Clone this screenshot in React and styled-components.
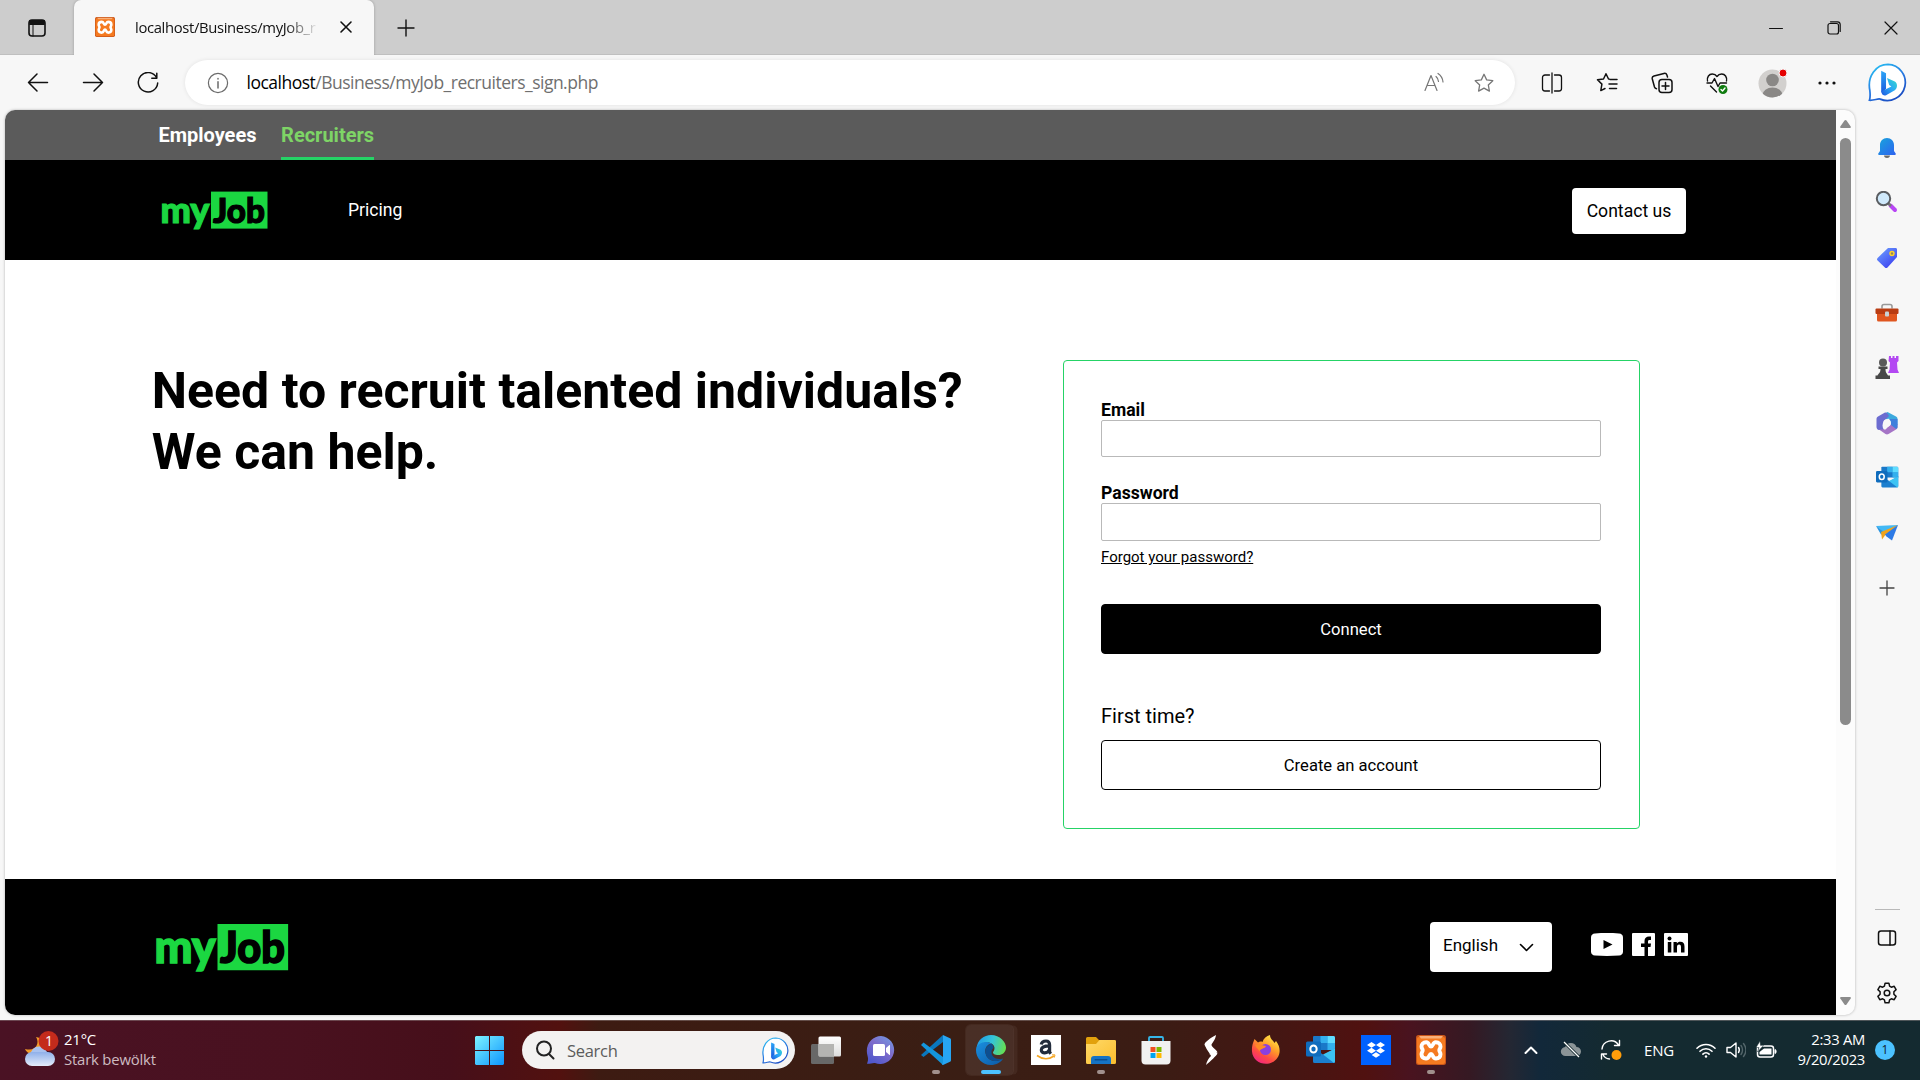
import React from "react";
import styled, { createGlobalStyle } from "styled-components";

const Global = createGlobalStyle`
  * { box-sizing: border-box; }
  html, body { margin: 0; padding: 0; background: #f7f7f7; }
  body { width: 1920px; height: 1080px; overflow: hidden; }
  svg { display: block; flex: none; }
  a { color: inherit; text-decoration: none; }
  button { font: inherit; }
`;

const ui = `"Open Sans", "Noto Sans", sans-serif`;
const web = `Roboto, "Liberation Sans", sans-serif`;

/* ---------- window shell ---------- */
const Screen = styled.div`
  width: 1920px;
  height: 1080px;
  display: flex;
  flex-direction: column;
  font-family: ${ui};
  color: #111;
`;
const Slot = styled.div`
  width: ${(p) => p.$w}px;
  height: ${(p) => (p.$h ? `${p.$h}px` : "100%")};
  flex: none;
  display: flex;
  align-items: center;
  justify-content: center;
`;
const Spacer = styled.div`
  flex: 1;
`;

const TabStrip = styled.header`
  height: 55px;
  flex: none;
  display: flex;
  background: #cdcdcd;
  box-shadow: inset 0 -1px 0 #bfbfbf;
`;
const TabShell = styled.div`
  width: 300px;
  height: 55px;
  display: flex;
  align-items: center;
  padding: 0 18px 1px 21px;
  background: #f7f7f7;
  border-radius: 7px 7px 0 0;
  box-shadow: 0 0 3px rgba(0, 0, 0, 0.25);
  clip-path: inset(0 -4px 0 -4px);
`;
const TabTitle = styled.div`
  width: 184px;
  margin-left: 20px;
  margin-right: 20px;
  white-space: nowrap;
  font-size: 14.8px;
  letter-spacing: -0.34px;
  mask-image: linear-gradient(90deg, #000 150px, transparent 184px);
`;

const Toolbar = styled.div`
  height: 55px;
  flex: none;
  display: flex;
  align-items: center;
  padding-left: 10px;
  background: #f7f7f7;
`;
const Address = styled.div`
  width: 1330px;
  height: 45px;
  margin: 0 9.5px 0 10px;
  padding-right: 6px;
  flex: none;
  display: flex;
  align-items: center;
  border-radius: 23px;
  background: #fff;
  box-shadow: 0 0 4px rgba(0, 0, 0, 0.09);
`;
const Url = styled.div`
  flex: 1;
  margin-left: -3.5px;
  padding-bottom: 2px;
  font-size: 17.5px;
  letter-spacing: -0.5px;
  white-space: nowrap;
  color: #6f6f6f;
  b {
    font-weight: 400;
    color: #000;
  }
`;

const Body = styled.div`
  height: 910px;
  flex: none;
  display: flex;
  padding-left: 5px;
  background: #f7f7f7;
`;
const Frame = styled.div`
  width: 1850px;
  height: 905px;
  flex: none;
  display: flex;
  overflow: hidden;
  border-radius: 10px;
  background: #fcfcfc;
  box-shadow: 0 0 3px rgba(0, 0, 0, 0.28);
`;
const ScrollBar = styled.div`
  width: 19px;
  display: flex;
  flex-direction: column;
  align-items: center;
  padding: 10px 4px 10px 3px;
`;
const Thumb = styled.div`
  width: 11px;
  height: 587px;
  margin-top: 10px;
  border-radius: 6px;
  background: #8b8b8b;
`;
const Sidebar = styled.aside`
  width: 64px;
  display: flex;
  flex-direction: column;
  align-items: center;
  padding-top: 11px;
`;
const Divider = styled.div`
  width: 25px;
  height: 1px;
  background: #b9b9b9;
`;

/* ---------- web page ---------- */
const Page = styled.main`
  width: 1831px;
  height: 905px;
  display: flex;
  flex-direction: column;
  background: #fff;
  font-family: ${web};
  color: #000;
`;
const Audience = styled.nav`
  height: 50px;
  display: flex;
  gap: 24.6px;
  padding-left: 153.4px;
  background: #5b5b5b;
`;
const AudienceLink = styled.a`
  height: 50px;
  padding-top: 13px;
  font-size: 20px;
  line-height: 24px;
  font-weight: 700;
  color: ${(p) => (p.$active ? "#7ed466" : "#fff")};
  border-bottom: 3px solid ${(p) => (p.$active ? "#25d366" : "transparent")};
`;
const Masthead = styled.div`
  height: 100px;
  display: flex;
  align-items: center;
  padding: 0 150px 0 156px;
  background: #000;
`;
const NavLink = styled.a`
  margin-left: 79px;
  font-size: 17.6px;
  color: #fff;
`;
const Contact = styled.button`
  width: 114px;
  height: 46px;
  margin-top: 2px;
  padding: 0;
  border: 0;
  border-radius: 4px;
  background: #fff;
  color: #000;
  font-size: 17.6px;
`;
const Hero = styled.section`
  height: 619px;
  display: flex;
  align-items: flex-start;
  justify-content: space-between;
  padding: 100px 196px 0 147px;
`;
const Headline = styled.h1`
  margin: 1px 0 0 -0.2px;
  font-size: 50px;
  line-height: 61px;
  font-weight: 700;
  white-space: nowrap;
`;
const Card = styled.div`
  width: 577px;
  height: 469px;
  padding: 39px 38px 0 37px;
  display: flex;
  flex-direction: column;
  border: 1px solid #25d366;
  border-radius: 4px;
`;
const Label = styled.label`
  font-size: 17.6px;
  line-height: 20px;
  font-weight: 700;
`;
const Input = styled.input`
  width: 500px;
  height: ${(p) => p.$h}px;
  margin: 0 0 ${(p) => p.$gap}px;
  border: 1px solid #b9b9b9;
  border-radius: 2px;
  background: #fff;
`;
const Forgot = styled.a`
  font-size: 15px;
  line-height: 18px;
  text-decoration: underline;
`;
const Action = styled.button`
  width: 500px;
  height: 50px;
  padding: 0;
  border: 1px solid #000;
  border-radius: 4px;
  background: ${(p) => (p.$solid ? "#000" : "#fff")};
  color: ${(p) => (p.$solid ? "#fff" : "#000")};
  font-size: 16.6px;
  margin-top: ${(p) => p.$top}px;
`;
const FirstTime = styled.p`
  margin: 50px 0 0;
  font-size: 20px;
  line-height: 24px;
`;
const Footer = styled.footer`
  height: 136px;
  display: flex;
  align-items: flex-start;
  padding: 43px 148px 0 150px;
  background: #000;
`;
const Language = styled.div`
  width: 122px;
  height: 50px;
  display: flex;
  align-items: center;
  justify-content: space-between;
  padding: 0 18px 4px 13px;
  border-radius: 4px;
  background: #fff;
  font-size: 17px;
  svg { margin-top: 5px; }
`;
const Social = styled.div`
  display: flex;
  gap: 9px;
  margin: 11px 0 0 39px;
`;

const LogoText = styled.text`
  font-family: Lato, "Open Sans", sans-serif;
  font-weight: 900;
  stroke-width: 1.2;
`;
const Logo = ({ width }) => (
  <svg width={width} height={(width * 40) / 108} viewBox="0 0 108 40" style={{ overflow: "visible" }}>
    <LogoText x="-0.5" y="32.6" fontSize="36" fill="#1bd741" stroke="#1bd741" textLength="49" lengthAdjust="spacingAndGlyphs">my</LogoText>
    <rect x="50" y="1.600" width="56.500" height="37" fill="#1bd741" />
    <LogoText x="52" y="32.6" fontSize="34.5" fill="#000" stroke="#000" textLength="52" lengthAdjust="spacingAndGlyphs">Job</LogoText>
  </svg>
);

/* ---------- icons ---------- */
const Line = ({ s = 24, vb, w = 1.3, c = "#111", children, ...r }) => (
  <svg width={s} height={s} viewBox={`0 0 ${vb || s} ${vb || s}`} fill="none" stroke={c} strokeWidth={w} strokeLinecap="round" strokeLinejoin="round" {...r}>
    {children}
  </svg>
);

const Xampp = ({ size }) => (
  <svg width={size} height={size} viewBox="0 0 30 30">
    <rect width="30" height="30" rx="2.5" fill="#c9561a" />
    <rect x="1" y="2" width="28" height="27" rx="2" fill="#f57a20" />
    <path d="M3 1h24l-2 2.500H5z" fill="#f9b07a" />
    <path d="M10.200 7.300C7 7.300 5.500 9.300 5.500 11.500c0 2 1.200 2.500 1.200 3.800s-1.200 2-1.200 4c0 2.300 1.500 4.200 4.500 4.200 3.800 0 2.800-4.600 5-4.600s1.200 4.600 5 4.600c3 0 4.500-1.900 4.500-4.200 0-2-1.200-2.700-1.200-4s1.200-1.800 1.200-3.800c0-2.200-1.500-4.200-4.700-4.200-3.300 0-2.500 4.300-4.800 4.300s-1.500-4.300-4.800-4.300z" fill="#f57a20" stroke="#fff" strokeWidth="3.900" strokeLinejoin="round" />
  </svg>
);

const Bing = ({ size }) => (
  <svg width={size} height={size} viewBox="0 0 40 40">
    <defs>
      <linearGradient id="bingRing" x1="0" y1="0" x2="0.6" y2="1">
        <stop offset="0" stopColor="#27c8f5" />
        <stop offset="0.6" stopColor="#2878e0" />
        <stop offset="1" stopColor="#1b4fc4" />
      </linearGradient>
      <linearGradient id="bingStem" x1="0" y1="0" x2="0" y2="1">
        <stop offset="0" stopColor="#2ba6f7" />
        <stop offset="1" stopColor="#1b55dc" />
      </linearGradient>
      <linearGradient id="bingBowl" x1="1" y1="0" x2="0" y2="1">
        <stop offset="0" stopColor="#36dcc9" />
        <stop offset="0.5" stopColor="#2aa8f5" />
        <stop offset="1" stopColor="#1f5ae0" />
      </linearGradient>
    </defs>
    <path d="M20.500 1.500A18.500 18.500 0 1 1 12.500 37c-3-.6-6 1.500-11 1.200 1.200-4 .6-7 .4-10C-1 14 8 1.500 20.500 1.500z" fill="#fff" stroke="url(#bingRing)" strokeWidth="1.800" />
    <path d="M13.500 8l5 2.500V26l-3.500 6-1.500-2.500z" fill="url(#bingStem)" />
    <path d="M19.500 15.500l8 3.500c3 2 3 6.500 0 9l-9 5c-3 1-5-1-4.500-4l10-5-2.300-1.500z" fill="url(#bingBowl)" />
  </svg>
);

const star = "M12 2.500l2.900 6.100 6.700.9-4.900 4.600 1.200 6.700L12 17.600l-5.900 3.200 1.200-6.700L2.400 9.500l6.700-.9z";

const EdgeLogo = () => (
  <svg width="30" height="30" viewBox="0 0 30 30">
    <defs>
      <linearGradient id="edgeTop" x1="0" y1="0.400" x2="1" y2="0.600">
        <stop offset="0" stopColor="#1f9be6" />
        <stop offset="0.500" stopColor="#35c5d8" />
        <stop offset="1" stopColor="#67e04e" />
      </linearGradient>
      <linearGradient id="edgeLow" x1="0" y1="0" x2="1" y2="1">
        <stop offset="0" stopColor="#1a8fe0" />
        <stop offset="1" stopColor="#0c59a4" />
      </linearGradient>
    </defs>
    <path d="M0.500 13C1.500 5 8 0 15 0c9 0 15 7 15 12.500 0 5-4 7.500-7.500 7.500-4 0-5.500-1.500-5.500-2.500s1.500-1.500 1.500-4.500c0-3-3-5.500-7-5.500-5 0-9 2.500-11 5.500z" fill="url(#edgeTop)" />
    <path d="M0 15c0-5 5-8 10-8 2 0 4 .6 5.500 1.800C11.500 9 8.500 13 9.500 18c1 5.500 6 8.500 11 8 3-.3 5-1.500 6.500-2.500-2 4-7 6.500-12 6.500C6 30 0 23 0 15z" fill="url(#edgeLow)" />
    <path d="M15.500 8.800C11 10 8.500 14 9.500 18c1 5.500 6 8.500 11 8 3-.3 5-1.500 6.500-2.500-7 2-12-2-11.500-7 .1-1.500 1-2.500 2-3.500 0-2-.8-3.400-2-4.200z" fill="#0d4f91" />
  </svg>
);

const Outlook = ({ size }) => (
  <svg width={size} height={size} viewBox="0 0 30 30">
    <path d="M8 1h19.500A1.500 1.500 0 0 1 29 2.500V15H7V2a1 1 0 0 1 1-1z" fill="#1a78c8" />
    <path d="M14.500 1h7v7h-7zM21.500 8H29v7h-7.500z" fill="#33b0ee" />
    <path d="M21.500 1h6A1.500 1.500 0 0 1 29 2.500V8h-7.500z" fill="#5fdcff" />
    <path d="M7 13.500l11 6.500L29 13.500V26.500A1.500 1.500 0 0 1 27.500 28H8.500A1.500 1.500 0 0 1 7 26.500z" fill="#1b7fcf" />
    <path d="M29 13.500v13a1.500 1.500 0 0 1-1 1.400L17 19.500z" fill="#3cc3f4" />
    <rect x="0" y="6.500" width="15" height="15" rx="1.500" fill="#0f6cbd" />
    <ellipse cx="7.500" cy="14" rx="3.200" ry="3.600" fill="none" stroke="#fff" strokeWidth="2" />
  </svg>
);

const SideIcons = [
  <svg width="24" height="24" viewBox="0 0 24 24" key="bell">
    <defs><linearGradient id="bell" x1="0" y1="0" x2="1" y2="1"><stop offset="0" stopColor="#17a5dc" /><stop offset="1" stopColor="#2e62f0" /></linearGradient></defs>
    <path d="M9 19.500h6c-.3 1.800-1.500 2.500-3 2.500s-2.700-.7-3-2.500z" fill="#6a6a6a" />
    <path d="M12 2c4 0 7 3 7 7v6l1.700 2.500c.4.700 0 1.500-.8 1.500H4.100c-.8 0-1.200-.8-.8-1.500L5 15V9c0-4 3-7 7-7z" fill="url(#bell)" />
  </svg>,
  <svg width="24" height="24" viewBox="0 0 24 24" key="search">
    <path d="M15.500 14.500l4.500 4.500" stroke="#b845f5" strokeWidth="4" strokeLinecap="round" />
    <path d="M12.500 11.500l3.500 3.500" stroke="#777" strokeWidth="2.500" />
    <circle cx="8.500" cy="7.500" r="6.700" fill="#cfe9fb" stroke="#5a5d61" strokeWidth="2" />
  </svg>,
  <svg width="24" height="24" viewBox="0 0 24 24" key="tag">
    <defs><linearGradient id="tag" x1="0" y1="0" x2="0.800" y2="1"><stop offset="0" stopColor="#6fa4ff" /><stop offset="1" stopColor="#3a3df0" /></linearGradient></defs>
    <path d="M13 2h7.500c1 0 1.500.6 1.500 1.500V11L12.500 21.500c-.8.800-1.800.8-2.600 0L2.600 14.500c-.8-.8-.8-1.800 0-2.600z" fill="url(#tag)" />
    <circle cx="17" cy="7.500" r="2" fill="#8f8660" stroke="#ffd02a" strokeWidth="1.500" />
  </svg>,
  <svg width="24" height="24" viewBox="0 0 24 24" key="tools">
    <path d="M7 7.500V5.500A2 2 0 0 1 9 3.500h6a2 2 0 0 1 2 2v2" fill="none" stroke="#999" strokeWidth="1.600" />
    <rect x="2" y="10" width="20" height="10.500" rx="1.500" fill="#e0561f" />
    <rect x="0.500" y="7.500" width="23" height="5.500" rx="1" fill="#b93c12" />
    <rect x="10" y="10.500" width="4" height="5" rx="1" fill="#c9d2d6" />
  </svg>,
  <svg width="24" height="24" viewBox="0 0 24 24" key="games">
    <path d="M14 0h2v2h1.500V0h2v2H21V0h2.500v5L22 6.500l.5 7 1.500 3.500H13l1.500-3.500.5-7L13.500 5z" fill="#b348f2" />
    <circle cx="8" cy="6.500" r="4" fill="#5a5a5a" />
    <path d="M3.500 10.500h9v2.500h-2c0 4 1.500 4.500 2.500 6.500h2V23H.5v-3.500h2C3.500 17.500 5.500 17 5.500 13h-2z" fill="#484848" />
  </svg>,
  <svg width="24" height="24" viewBox="0 0 24 24" key="m365">
    <path d="M12.500 1L21 5.500c1 .6 1.500 1.500 1.500 2.500v6l-6-1c1-4-2-6.500-6-4.500L9 3z" fill="#3ca9dd" />
    <path d="M10 1.500L3 5.500C2 6.100 1.500 7 1.500 8v8C1.500 17.500 2.500 19 4 19h5c-2-3-2-6 0-9l5-5c-1-2-2.500-4-4-3.500z" fill="#6c6cd0" />
    <path d="M22.500 13v3c0 1-.5 2-1.500 2.500l-7.500 4.500c-1 .6-2 .6-3 0L4 18.500h6.500l6-6z" fill="#a574c6" />
    <path d="M22.500 8v8c0 1.500-1 2-2 1.500L16 14c0-4-1-5-2-6z" fill="#3f7fdc" />
    <circle cx="12" cy="12" r="3.800" fill="#f7f7f7" />
  </svg>,
  <Outlook size={23} key="outlook" />,
  <svg width="24" height="24" viewBox="0 0 24 24" key="plane">
    <path d="M1 5l22-1-9 8-4 .5z" fill="#43b9f5" />
    <path d="M1 5l8 6 14-7L9 13l-3 .5z" fill="#2a94e0" />
    <path d="M23 4L6 11l1 7.500 3-4z" fill="#f0a31c" />
    <path d="M23 4L10 13.500l1.500 2 5.500 4z" fill="#2d7ae6" />
  </svg>,
  <Line s={24} w={1.300} c="#444" key="plus"><path d="M12 5v14M5 12h14" /></Line>,
];

/* ---------- taskbar ---------- */
const Taskbar = styled.footer`
  height: 60px;
  flex: none;
  display: flex;
  align-items: center;
  padding-bottom: 1px;
  border-top: 1px solid rgba(150, 140, 140, 0.45);
  background: linear-gradient(90deg, #4a1224 0, #49111f 300px, #460f1a 450px, #52110f 560px, #3d1b12 600px, #3a1e14 960px, #3b1c14 1160px, #431713 1270px, #501110 1365px, #49131f 1410px, #351923 1470px, #242733 1510px, #12283a 1540px, #142a30 1610px, #142a30 1920px);
  color: #fff;
`;
const Weather = styled.div`
  width: 461.5px;
  height: 100%;
  display: flex;
  align-items: center;
  padding: 0 0 1px 24px;
`;
const WeatherText = styled.div`
  margin-left: 4px;
  padding-bottom: 2px;
  font-size: 14.9px;
  line-height: 20px;
  letter-spacing: -0.2px;
  span { color: #cdbcc1; display: block; }
`;
const Search = styled.div`
  width: 273px;
  height: 38px;
  margin: 0 3.5px 0 5.5px;
  padding: 0 6px 0 13px;
  flex: none;
  display: flex;
  align-items: center;
  justify-content: space-between;
  border-radius: 19px;
  background: #f3f2f1;
  color: #5c5c5c;
  font-size: 16.5px;
  letter-spacing: -0.3px;
  p { flex: 1; margin: 0 0 0 12px; }
`;
const TaskButton = styled.div`
  position: relative;
  width: 55px;
  height: 50px;
  flex: none;
  display: flex;
  align-items: center;
  justify-content: center;
  &::before {
    content: "";
    position: absolute;
    inset: 0 6px 0 2px;
    border-radius: 5px;
    background: ${(p) => (p.$active ? "rgba(255,255,255,.08)" : "none")};
    box-shadow: ${(p) => (p.$active ? "0 0 0 1px rgba(255,255,255,.05), 5px 0 0 -0.5px rgba(255,255,255,.05)" : "none")};
  }
  &::after {
    content: "";
    position: absolute;
    bottom: 1px;
    width: ${(p) => (p.$active ? 20 : p.$open ? 8 : 0)}px;
    height: 4px;
    border-radius: 2px;
    background: ${(p) => (p.$active ? "#4cc2ff" : "#a1908d")};
  }
  svg { position: relative; }
`;
const Lang = styled.span`
  font-size: 15px;
  letter-spacing: -0.2px;
`;
const Clock = styled.div`
  width: 80px;
  padding-bottom: 2px;
  text-align: right;
  font-size: 14.8px;
  line-height: 20px;
  letter-spacing: -0.3px;
  white-space: nowrap;
`;
const Badge = styled.div`
  width: 20px;
  height: 20px;
  border-radius: 50%;
  background: #4cc2ff;
  color: #10222c;
  font-size: 12px;
  line-height: 20px;
  text-align: center;
`;
const BadgeText = styled.text`
  font-family: ${ui};
`;

const apps = [
  { icon: <svg width="30" height="30" viewBox="0 0 30 30"><defs><linearGradient id="tv" x1="0" y1="0" x2="0" y2="1"><stop offset="0" stopColor="#fff" /><stop offset="1" stopColor="#dcdcdc" /></linearGradient></defs><rect y="9" width="23" height="20" rx="1.500" fill="#686868" /><rect x="7.500" y="1.500" width="22.500" height="20" rx="1.500" fill="url(#tv)" /><path d="M7.500 9H23v12.500H9a1.500 1.500 0 0 1-1.500-1.500z" fill="#b4b4b2" /></svg> },
  { icon: <svg width="30" height="30" viewBox="0 0 30 30"><defs><linearGradient id="chat" x1="1" y1="0" x2="0.300" y2="1"><stop offset="0" stopColor="#6f9fe6" /><stop offset="0.500" stopColor="#7f6ccb" /><stop offset="1" stopColor="#5058cc" /></linearGradient></defs><path d="M15 1a14 14 0 1 1-6 27c-2-.5-4 .8-8 .8 1-3 1.500-5 .5-8C-1.500 10 6 1 15 1z" fill="url(#chat)" /><rect x="7" y="9" width="12" height="12" rx="1.500" fill="#fff" /><path d="M20 13l3.500-3c.3-.2.500 0 .5.300v9.400c0 .3-.2.500-.5.300L20 17z" fill="#fff" /></svg> },
  { open: true, icon: <svg width="30" height="30" viewBox="0 0 30 30"><path d="M0 20l2.500 2L22 7V0z" fill="#0a77bd" /><path d="M0 10l2.500-2.500L22 22v8z" fill="#1496dc" /><path d="M22 0l7 3.200c.6.300 1 .8 1 1.500v20.600c0 .7-.4 1.200-1 1.500L22 30c-.5 0-.8-.3-1-1l1-1V3z" fill="#27a5f2" /></svg> },
  { active: true, icon: <EdgeLogo /> },
  { icon: <svg width="30" height="30" viewBox="0 0 30 30"><rect width="30" height="30" fill="#fff" /><path d="M10.200 9.500c.5-2.600 2.100-3.500 4.800-3.500 2.800 0 3.600 1.500 3.600 4v6.500c0 .8.500 1.400 1.200 2.200M18.600 10.800c-5 0-8.300.8-8.300 4.200 0 3.800 6.500 4 8.300-.8" fill="none" stroke="#222c3c" strokeWidth="3.200" /><path d="M6 20.500c5.500 4 12 4 17 .5" fill="none" stroke="#f5a623" strokeWidth="1.600" /><path d="M21 19.800l3 .1-.7 2.700" fill="none" stroke="#f5a623" strokeWidth="1" /></svg> },
  { open: true, icon: <svg width="30" height="30" viewBox="0 0 30 30"><defs><linearGradient id="folder" x1="0" y1="0" x2="1" y2="1"><stop offset="0" stopColor="#ffd968" /><stop offset="1" stopColor="#fbbe2e" /></linearGradient></defs><path d="M0 3.500A1.500 1.500 0 0 1 1.500 2H10l3 3h15.500A1.500 1.500 0 0 1 30 6.500V12H0z" fill="#e2a10d" /><path d="M0 9h10l3.500-4h15A1.500 1.500 0 0 1 30 6.500v21a1.500 1.500 0 0 1-1.500 1.500h-27A1.500 1.500 0 0 1 0 27.500z" fill="url(#folder)" /><path d="M5 29v-5a3 3 0 0 1 3-3h14a3 3 0 0 1 3 3v5z" fill="#1673c4" /><rect x="8.500" y="24" width="13" height="1.500" rx=".7" fill="#0b4f91" /></svg> },
  { icon: <svg width="30" height="30" viewBox="0 0 30 30"><path d="M8 7V3a1 1 0 0 1 1-1h12a1 1 0 0 1 1 1v4" fill="none" stroke="#35b6e8" strokeWidth="1.800" /><path d="M.5 6h29v19.500a4 4 0 0 1-4 4h-21a4 4 0 0 1-4-4z" fill="#f1f1f1" /><path d="M9.500 12h5v5h-5z" fill="#f25022" /><path d="M15.500 12h5v5h-5z" fill="#7fba00" /><path d="M9.500 18h5v5h-5z" fill="#00a4ef" /><path d="M15.500 18h5v5h-5z" fill="#ffb900" /></svg> },
  { icon: <svg width="30" height="30" viewBox="0 0 30 30"><path d="M20 0c-6 3-11.500 7.500-11.500 9.500 0 1.500 4.500 4.500 6.500 6.500l-1.500 3.500 8-2c0-2-6-5.500-6-7.500 0-1.500 4-5 4.500-10z" fill="#fff" /><path d="M9 9.500l12.500 9c-1 2-7 8-11.500 11.500 1-4 2-6 5-9-1-3-6-8-6-11.500z" fill="#fff" /></svg> },
  { icon: <svg width="30" height="30" viewBox="0 0 30 30"><defs><linearGradient id="ff" x1="0.800" y1="0" x2="0.200" y2="1"><stop offset="0" stopColor="#fff04a" /><stop offset="0.400" stopColor="#ff9a28" /><stop offset="0.700" stopColor="#ff4a45" /><stop offset="1" stopColor="#f0208a" /></linearGradient></defs><path d="M2 8l1.500-4L7 7.500c1.500-1 3-1.200 4.500-.5 1-3.500 4-6 7.500-7 0 4 3 5 4.500 8L25 6c3 4 4 7.500 3.500 11.500C27.500 24 22 28.800 15 28.800S1.500 24 1 16.500C.8 13 1.200 10.500 2 8z" fill="url(#ff)" /><circle cx="14.500" cy="14.500" r="5.500" fill="#8a3fe0" /><path d="M4 10c4-2 6 0 11 1-1 3-5 2-6.500 5C6 13 5 12 4 10z" fill="#ff8b25" /></svg> },
  { icon: <Outlook size={30} /> },
  { icon: <svg width="30" height="30" viewBox="0 0 30 30"><rect width="30" height="30" fill="#0061fe" /><path d="M10.500 7l4.500 2.900-4.500 2.900L6 9.900zM19.500 7L24 9.900l-4.500 2.900L15 9.900zM10.500 12.800l4.500 2.900-4.500 2.900L6 15.700zM19.500 12.800l4.500 2.900-4.500 2.900-4.500-2.900zM15 17.200l4.300 2.800-4.300 2.800-4.300-2.800z" fill="#fff" /></svg> },
  { open: true, icon: <Xampp size={30} /> },
];

export default function App() {
  return (
    <Screen>
      <Global />
      <TabStrip>
        <Slot $w={74}>
          <Line s={20} w={1.600}><rect x="2" y="2" width="16" height="16" rx="3" /><path d="M3 4.500h14M3 3h14M3 6h14" strokeWidth="2" /><path d="M6 7v11" strokeWidth="1" /></Line>
        </Slot>
        <TabShell>
          <Xampp size={20} />
          <TabTitle>localhost/Business/myJob_r</TabTitle>
          <Line s={14} w={1.600}><path d="M2 2l10 10M12 2L2 12" /></Line>
        </TabShell>
        <Slot $w={63}><Line s={18} w={1.400}><path d="M9 1v16M1 9h16" /></Line></Slot>
        <Spacer />
        <Slot $w={57.5}><Line s={14} w={1}><path d="M.5 7.500h13" /></Line></Slot>
        <Slot $w={57.5}><Line s={14} w={1.200}><rect x="1" y="2.500" width="10.500" height="10.500" rx="2" /><path d="M3.500.800h7A2.800 2.800 0 0 1 13.200 3.500v7" /></Line></Slot>
        <Slot $w={57.5}><Line s={14} w={1.200}><path d="M1 1l12 12M13 1L1 13" /></Line></Slot>
      </TabStrip>

      <Toolbar>
        <Slot $w={55}><Line s={22} w={1.500}><path d="M20.500 10.500H1.500M10 2L1.500 10.500l8.500 8.500" /></Line></Slot>
        <Slot $w={55}><Line s={22} w={1.500}><path d="M1.500 10.500h19M12 2l8.500 8.500-8.500 8.500" /></Line></Slot>
        <Slot $w={55}><Line s={22} w={1.500}><path d="M19.500 5.500A9.700 9.700 0 1 0 20.700 11M19.800 1.200v5h-5" /></Line></Slot>
        <Address>
          <Slot $w={65}><Line s={22} w={1.200} c="#6b6b6b"><circle cx="11" cy="11" r="9.600" /><path d="M11 9.800V16M11 6.500v.4" strokeWidth="1.500" /></Line></Slot>
          <Url><b>localhost</b>/Business/myJob_recruiters_sign.php</Url>
          <Slot $w={50}><Line s={22} w={1.200} c="#767676"><path d="M2 18.500L8 3.500l6 15M4 13.500h8M13 4.500c1.500 1.200 2.300 2.800 2.500 5M15 1.500c3 2 4.700 5 5 8.500" /></Line></Slot>
          <Slot $w={50}><Line s={22} vb={24} w={1.400} c="#767676"><path d={star} /></Line></Slot>
        </Address>
        <Slot $w={55}><Line s={22} w={1.500}><path d="M8.500 3H4a2.500 2.500 0 0 0-2.500 2.500v11A2.500 2.500 0 0 0 4 19h4.500M13.500 3H18a2.500 2.500 0 0 1 2.500 2.500v11A2.500 2.500 0 0 1 18 19h-4.500M11 1v20" strokeWidth="1.300" /></Line></Slot>
        <Slot $w={55}><Line s={22} w={1.500}><path d="M13 7h-.5L10 1.800 7.500 7l-6 .8 4.400 4.300-1.100 6.500L9 16.500M14 7.500h7M13 12h8M13.500 16.500h7" /></Line></Slot>
        <Slot $w={55}><Line s={22} w={1.500}><rect x="8" y="7.500" width="13" height="13" rx="3" /><path d="M14.500 10.500v7M11 14h7M16.500 5l-.6-2a2.500 2.500 0 0 0-3-1.600L3 4a2.500 2.500 0 0 0-1.700 3l2.200 8a2.500 2.500 0 0 0 2 1.700" /></Line></Slot>
        <Slot $w={55}>
          <Line s={22} w={1.400}><path d="M1.500 9C.8 5 3 2 6.300 2 8.500 2 10 3 11 4.500 12 3 13.500 2 15.700 2 19 2 21.200 5 20.500 9M1 11h5l2.500-4.500 3.500 8 2-3.500h6.500M4.500 14l6 6" /><circle cx="17" cy="17.500" r="4.500" fill="#107c10" stroke="none" /><path d="M15 17.500l1.500 1.500 2.500-3" stroke="#fff" /></Line>
        </Slot>
        <Slot $w={55}>
          <svg width="30" height="30" viewBox="-1.5 0 30 30"><defs><clipPath id="face"><circle cx="14" cy="15.500" r="14" /></clipPath></defs><circle cx="14" cy="15.500" r="14" fill="#d2d0ce" /><circle cx="14" cy="12" r="6.300" fill="#8a8886" /><ellipse cx="14" cy="27" rx="10" ry="7.500" fill="#8a8886" clipPath="url(#face)" /><circle cx="24.500" cy="5" r="4" fill="#e50000" stroke="#f7f7f7" /></svg>
        </Slot>
        <Slot $w={55}><Line s={20} w={0}><g fill="#111"><circle cx="3" cy="10" r="1.600" /><circle cx="10" cy="10" r="1.600" /><circle cx="17" cy="10" r="1.600" /></g></Line></Slot>
        <Slot $w={65.5}><Bing size={39} /></Slot>
      </Toolbar>

      <Body>
        <Frame>
          <Page>
            <Audience>
              <AudienceLink>Employees</AudienceLink>
              <AudienceLink $active>Recruiters</AudienceLink>
            </Audience>
            <Masthead>
              <Logo width={108} />
              <NavLink>Pricing</NavLink>
              <Spacer />
              <Contact>Contact us</Contact>
            </Masthead>
            <Hero>
              <Headline>Need to recruit talented individuals?<br />We can help.</Headline>
              <Card>
                <Label>Email</Label>
                <Input $h={37} $gap={26} />
                <Label>Password</Label>
                <Input $h={38} $gap={7} />
                <Forgot>Forgot your password?</Forgot>
                <Action $solid $top={38}>Connect</Action>
                <FirstTime>First time?</FirstTime>
                <Action $top={12}>Create an account</Action>
              </Card>
            </Hero>
            <Footer>
              <Logo width={135} />
              <Spacer />
              <Language>English<Line s={15} w={1.600} c="#000"><path d="M1.500 4.500l6 6 6-6" /></Line></Language>
              <Social>
                <svg width="32" height="23" viewBox="0 0 32 23"><path d="M4 .5C12-.1 20-.1 28 .5c2.500.2 4 1.500 4 4v14c0 2.500-1.500 3.800-4 4-8 .6-16 .6-24 0-2.500-.2-4-1.500-4-4v-14C0 2 1.500.7 4 .5z" fill="#fff" /><path d="M12.500 7l9 4.500-9 4.500z" fill="#000" /></svg>
                <svg width="23" height="23" viewBox="0 0 23 23"><rect width="23" height="23" rx="1" fill="#fff" /><path d="M12.500 23v-9H9v-3.500h3.500V8c0-3 1.800-4.500 4.500-4.500h2V7h-1.500c-1 0-1.500.5-1.500 1.500v2H19l-.5 3.500H16v9z" fill="#000" /></svg>
                <svg width="24" height="23" viewBox="0 0 24 23"><rect width="24" height="23" rx="1" fill="#fff" /><circle cx="5.500" cy="5.500" r="2" fill="#000" /><path d="M3.800 9h3.500v10.500H3.800zM9.500 9h3.300v1.500c.8-1.200 2-1.800 3.500-1.800 3 0 4.200 1.800 4.200 5v5.800H17v-5.300c0-1.700-.5-2.600-1.900-2.600-1.500 0-2.100 1-2.100 2.700v5.200H9.500z" fill="#000" /></svg>
              </Social>
            </Footer>
          </Page>
          <ScrollBar>
            <svg width="11" height="8" viewBox="0 0 11 8"><path d="M5.500 0c.4 0 .7.200 1 .6l4.200 6c.4.700 0 1.400-.7 1.400H1C.3 8-.1 7.300.3 6.600l4.200-6c.3-.4.600-.6 1-.6z" fill="#8b8b8b" /></svg>
            <Thumb />
            <Spacer />
            <svg width="11" height="8" viewBox="0 0 11 8"><path d="M5.500 8c-.4 0-.7-.2-1-.6l-4.200-6C-.1.700.3 0 1 0h9c.7 0 1.100.7.700 1.400l-4.200 6c-.3.400-.6.600-1 .6z" fill="#8b8b8b" /></svg>
          </ScrollBar>
        </Frame>
        <Sidebar>
          {SideIcons.map((icon, i) => <Slot $w={64} $h={54.9} key={i}>{icon}</Slot>)}
          <Spacer />
          <Divider />
          <Slot $w={64} $h={55}><Line s={20} w={1.500}><rect x="1.500" y="3" width="17" height="14" rx="2.500" /><path d="M13 3v14" /></Line></Slot>
          <Slot $w={64} $h={55}>
            <Line s={22} w={1.500}><circle cx="11" cy="11" r="2.800" /><path d="M9.100 1.200h3.800l.7 3 1.700 1 2.900-.9 1.900 3.300-2.200 2.100v2.600l2.200 2.100-1.900 3.300-2.900-.9-1.700 1-.7 3H9.100l-.7-3-1.700-1-2.900.9-1.900-3.300 2.200-2.100V9.700L1.900 7.600l1.900-3.300 2.900.9 1.700-1z" /></Line>
          </Slot>
        </Sidebar>
      </Body>

      <Taskbar>
        <Weather>
          <svg width="36" height="38" viewBox="0 0 36 38">
            <defs><linearGradient id="cloud" x1="0" y1="0" x2="0" y2="1"><stop offset="0" stopColor="#8fb0ea" /><stop offset="1" stopColor="#e4ecfa" /></linearGradient></defs>
            <path d="M12 6c4 6 0 15-11 12 3 8 19 7 20-3 .5-5-3-8-9-9z" fill="#f09a2a" />
            <circle cx="15" cy="24" r="8.500" fill="#a9c2ef" />
            <rect x="1" y="21" width="30" height="14" rx="7" fill="url(#cloud)" />
            <circle cx="24.500" cy="10" r="10" fill="#c42b1c" />
            <BadgeText x="21" y="15" fontSize="14" fill="#fff">1</BadgeText>
          </svg>
          <WeatherText>21°C<span>Stark bewölkt</span></WeatherText>
        </Weather>
        <Slot $w={55}>
          <svg width="29" height="29" viewBox="0 0 29 29"><defs><linearGradient id="win" gradientUnits="userSpaceOnUse" x1="0" y1="0" x2="29" y2="29"><stop offset="0" stopColor="#7df3ff" /><stop offset="1" stopColor="#0d95ff" /></linearGradient></defs><path d="M1 0h13v14H0V1zM15 0h13l1 1v13H15zM0 15h14v14H1l-1-1zM15 15h14v13l-1 1H15z" fill="url(#win)" /></svg>
        </Slot>
        <Search>
          <Line s={20} w={2} c="#222"><circle cx="9" cy="8.500" r="7" /><path d="M14 14l4.500 4.500" /></Line>
          <p>Search</p>
          <Bing size={27} />
        </Search>
        {apps.map((a, i) => <TaskButton key={i} $open={a.open} $active={a.active}>{a.icon}</TaskButton>)}
        <Spacer />
        <Slot $w={40}><Line s={16} w={2} c="#fff"><path d="M2.500 11L8 5.500l5.500 5.500" /></Line></Slot>
        <Slot $w={40}><svg width="22" height="20" viewBox="0 0 22 20"><path d="M5.500 16a4.500 4.500 0 0 1-.3-9A6 6 0 0 1 16.500 7a4.500 4.500 0 0 1 0 9z" fill="#8b9497" /><path d="M4 2l15 15" stroke="#142a30" strokeWidth="3" /><path d="M4 2l15 15" stroke="#fff" strokeWidth="1.300" /></svg></Slot>
        <Slot $w={40}><Line s={22} w={1.400} c="#fff"><path d="M2 10A9 9 0 0 1 18.500 6M19.500 1.500V6.500h-5M1.500 20v-5h5M3 15.500c1 2.500 4 4.500 6.500 4.500" /><circle cx="16.500" cy="16" r="5" fill="#ff9d0a" stroke="none" /></Line></Slot>
        <Slot $w={56}><Lang>ENG</Lang></Slot>
        <Slot $w={38}><Line s={20} w={1.600} c="#fff"><path d="M1 8.200a12.700 12.700 0 0 1 18 0M4 11.300a8.500 8.500 0 0 1 12 0M6.900 14.100a4.400 4.400 0 0 1 6.200 0" /><circle cx="10" cy="16.500" r="1.200" fill="#fff" stroke="none" /></Line></Slot>
        <Slot $w={22}><Line s={20} w={1.400} c="#fff"><path d="M1 7.500h3.500L10 3v14l-5.500-4.500H1z" /><path d="M12.500 7.500c1 1.500 1 3.500 0 5" /><path d="M15 5.500c2 2.500 2 6.500 0 9M17.500 3.500c3 4 3 9 0 13" stroke="#53656a" /></Line></Slot>
        <Slot $w={38}><svg width="21" height="18" viewBox="0 0 21 18"><rect x="1.500" y="5" width="16" height="11" rx="2.500" fill="none" stroke="#fff" strokeWidth="1.500" /><path d="M8 7.500h7.500v6h-12V11z" fill="#fff" /><path d="M19 8.500c1.500 0 1.500 4 0 4z" fill="#fff" stroke="#fff" /><path d="M4 0L0 6.500h3L1.500 11 7.500 4.500H4.500z" fill="#fff" stroke="#142a30" strokeWidth=".5" /></svg></Slot>
        <Clock>2:33 AM<br />9/20/2023</Clock>
        <Slot $w={40}><Badge>1</Badge></Slot>
        <Slot $w={15} />
      </Taskbar>
    </Screen>
  );
}
